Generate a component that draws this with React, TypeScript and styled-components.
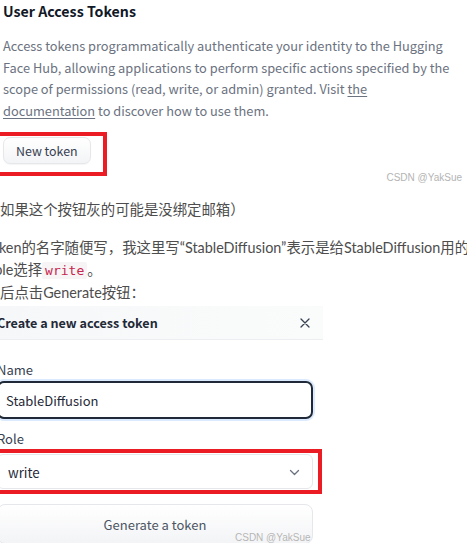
import styled, { createGlobalStyle } from "styled-components";

const GlobalStyle = createGlobalStyle`
  html, body {
    margin: 0;
    padding: 0;
    background: #ffffff;
    overflow: hidden;
  }
`;

// #region Style

const Page = styled.div`
  position: relative;
  width: 467px;
  height: 543px;
  overflow: hidden;
  background: #ffffff;
`;

const HubShot = styled.section`
  padding-left: 3px;
  font-family: "Noto Sans CJK SC", "Noto Sans", sans-serif;
`;

const Title = styled.h2`
  margin: 0;
  font-size: 14.2px;
  line-height: 22px;
  font-weight: 700;
  color: #111827;
`;

const Lead = styled.p`
  margin: 13px 0 0;
  font-size: 12.8px;
  line-height: 21.6px;
  color: #6b7280;
  white-space: nowrap;
`;

const DocLink = styled.a`
  color: inherit;
  text-decoration: underline;
  text-underline-offset: 2px;
`;

const ButtonRow = styled.div`
  display: flex;
  align-items: flex-end;
  justify-content: space-between;
  height: 54px;
  margin: 11px 0 0 -7px;
`;

const Highlight = styled.div<{ $pad: string }>`
  display: flex;
  border: 4px solid #ec1c24;
  padding: ${(p) => p.$pad};
`;

const NewTokenButton = styled.button`
  height: 27px;
  padding: 0 12px;
  border: 1px solid #e5e7eb;
  border-radius: 7px;
  background: linear-gradient(to bottom, #ffffff, #f3f4f6);
  box-shadow: 0 1px 1px rgba(0, 0, 0, 0.04);
  font-family: "Noto Sans CJK SC", sans-serif;
  font-size: 12.4px;
  color: #374151;
`;

const Mark = styled.span`
  font-family: "Liberation Sans", Arial, sans-serif;
  font-size: 10px;
  line-height: 12px;
  color: #b4b4b4;
  text-shadow: 0 0 1px #ffffff;
  white-space: nowrap;
`;

const TopMark = styled(Mark)`
  margin: 0 5px 2px 0;
`;

const BottomMark = styled(Mark)`
  position: absolute;
  left: 235px;
  top: 532px;
`;

const Article = styled.article`
  margin: 13px 0 0 -14.4px;
  font-family: Lato, "Noto Sans CJK SC", sans-serif;
  font-size: 14.4px;
  line-height: 22px;
  color: #4d4d4d;
  white-space: nowrap;

  p {
    margin: 0;
  }

  p + p {
    margin-top: 16px;
  }
`;

const InlineCode = styled.code`
  padding: 1px 3px;
  border-radius: 2px;
  background: #f6f4f4;
  color: #c7254e;
  font-family: "DejaVu Sans Mono", "Liberation Mono", monospace;
  font-size: 13px;
`;

const Dialog = styled.section`
  width: 336px;
  margin: 2px 0 0 -13px;
  font-family: "Noto Sans CJK SC", sans-serif;
  background: #ffffff;
`;

const DialogHeader = styled.header`
  display: flex;
  align-items: center;
  justify-content: space-between;
  height: 33px;
  padding: 0 13px 0 10px;
  border-bottom: 1px solid #eceef1;
  background: linear-gradient(to right, #f6f7f8, #fafbfb);
  font-size: 12.6px;
  font-weight: 600;
  color: #1f2937;
`;

const DialogBody = styled.div`
  display: flex;
  flex-direction: column;
  padding: 20px 10px 0;
`;

const Label = styled.label<{ $gap?: number }>`
  margin-top: ${(p) => p.$gap ?? 0}px;
  font-size: 13px;
  line-height: 20px;
  color: #374151;
`;

const NameInput = styled.div`
  display: flex;
  align-items: center;
  height: 38px;
  margin-top: 1px;
  padding-left: 7px;
  box-sizing: border-box;
  border: 2px solid #1f2937;
  border-radius: 7px;
  box-shadow: 0 0 0 2px #dbeafe;
  font-size: 13px;
  color: #1f2937;
`;

const RoleHighlight = styled(Highlight)`
  margin: 0 0 0 -8px;
  width: 333px;
  box-sizing: border-box;
`;

const RoleSelect = styled.div`
  display: flex;
  flex: 1;
  align-items: center;
  justify-content: space-between;
  height: 35px;
  padding: 2px 12px 0 10px;
  box-sizing: border-box;
  border: 1px solid #e5e7eb;
  border-radius: 6px;
  background: #ffffff;
  font-size: 13.3px;
  color: #1f2937;
`;

const GenerateButton = styled.button`
  height: 40px;
  margin-top: 10px;
  border: 1px solid #e5e7eb;
  border-radius: 8px;
  background: linear-gradient(to bottom, #ffffff, #f3f4f6);
  font-family: "Noto Sans CJK SC", sans-serif;
  font-size: 13px;
  color: #4b5563;
`;

// #endregion

export default function App() {
  return (
    <Page>
      <GlobalStyle />
      <HubShot>
        <Title>User Access Tokens</Title>
        <Lead>
          Access tokens programmatically authenticate your identity to the Hugging
          <br />
          Face Hub, allowing applications to perform specific actions specified by the
          <br />
          scope of permissions (read, write, or admin) granted. Visit <DocLink>the</DocLink>
          <br />
          <DocLink>documentation</DocLink> to discover how to use them.
        </Lead>
        <ButtonRow>
          <Highlight $pad="1px 12px 8px 3px" style={{ marginBottom: 10 }}>
            <NewTokenButton>New token</NewTokenButton>
          </Highlight>
          <TopMark>CSDN @YakSue</TopMark>
        </ButtonRow>
      </HubShot>

      <Article>
        <p>（如果这个按钮灰的可能是没绑定邮箱）</p>
        <p>
          token的名字随便写，我这里写“StableDiffusion”表示是给StableDiffusion用的。
          <br />
          Role选择<InlineCode>write</InlineCode>。
          <br />
          然后点击Generate按钮：
        </p>
      </Article>

      <Dialog>
        <DialogHeader>
          <span>Create a new access token</span>
          <svg width="10" height="10" viewBox="0 0 10 10" aria-hidden>
            <path d="M1 1L9 9M9 1L1 9" stroke="#374151" strokeWidth="1.3" strokeLinecap="round" />
          </svg>
        </DialogHeader>
        <DialogBody>
          <Label>Name</Label>
          <NameInput>StableDiffusion</NameInput>
          <Label $gap={10}>Role</Label>
          <RoleHighlight $pad="1px 5px 1px 4px">
            <RoleSelect>
              <span>write</span>
              <svg width="11" height="7" viewBox="0 0 11 7" aria-hidden>
                <path d="M1.5 1.5L5.5 5.5L9.5 1.5" fill="none" stroke="#6b7280" strokeWidth="1.3" strokeLinecap="round" strokeLinejoin="round" />
              </svg>
            </RoleSelect>
          </RoleHighlight>
          <GenerateButton>Generate a token</GenerateButton>
        </DialogBody>
      </Dialog>
      <BottomMark>CSDN @YakSue</BottomMark>
    </Page>
  );
}
